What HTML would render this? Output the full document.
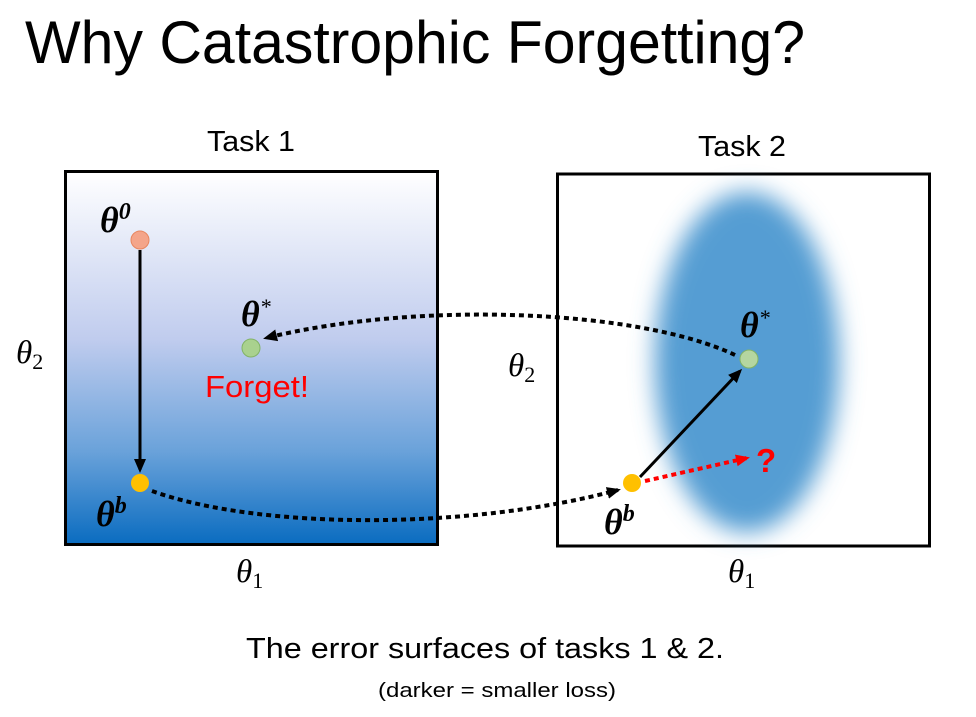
<!DOCTYPE html>
<html><head><meta charset="utf-8"><style>
html,body{margin:0;padding:0;background:#fff;}
svg{display:block;}
text{font-family:"Liberation Sans Narrow","Liberation Sans",sans-serif;}
.m{font-family:"Liberation Serif",serif;font-style:italic;}
</style></head><body>
<svg width="976" height="717" viewBox="0 0 976 717" xmlns="http://www.w3.org/2000/svg">
<defs>
<linearGradient id="g1" x1="0" y1="0" x2="0" y2="1">
<stop offset="0" stop-color="#ffffff"/>
<stop offset="0.45" stop-color="#c0ccee"/>
<stop offset="0.75" stop-color="#6aa2da"/>
<stop offset="1" stop-color="#0a6cc0"/>
</linearGradient>
<filter id="bl" x="-50%" y="-50%" width="200%" height="200%"><feGaussianBlur stdDeviation="12"/></filter>
<marker id="ah2" markerWidth="14" markerHeight="14" refX="11" refY="7" orient="auto" markerUnits="userSpaceOnUse"><path d="M0,1 L14,7 L0,13 z" fill="#000"/></marker>
<marker id="ahr" markerWidth="14" markerHeight="14" refX="11" refY="7" orient="auto" markerUnits="userSpaceOnUse"><path d="M0,1 L14,7 L0,13 z" fill="#f00"/></marker>
</defs>
<text x="25" y="63" font-size="60" font-weight="300" textLength="780" lengthAdjust="spacingAndGlyphs" fill="#000">Why Catastrophic Forgetting?</text>
<text x="207" y="151" font-size="29" textLength="88" lengthAdjust="spacingAndGlyphs">Task 1</text>
<text x="698" y="156" font-size="29" textLength="88" lengthAdjust="spacingAndGlyphs">Task 2</text>

<rect x="65.5" y="171.5" width="372" height="373" fill="url(#g1)" stroke="#000" stroke-width="3"/>
<rect x="557.5" y="174" width="372" height="372" fill="#fff" stroke="#000" stroke-width="3"/>
<ellipse cx="747" cy="362" rx="92" ry="170" fill="#559dd3" filter="url(#bl)"/>

<line x1="140" y1="250" x2="140" y2="470" stroke="#000" stroke-width="3" marker-end="url(#ah2)"/>
<path d="M152,491 C260,530 470,530 618,490" fill="none" stroke="#000" stroke-width="4" stroke-dasharray="5,4" marker-end="url(#ah2)"/>
<path d="M735,355 C640,310 420,300 266,338" fill="none" stroke="#000" stroke-width="4" stroke-dasharray="5,4" marker-end="url(#ah2)"/>
<line x1="640" y1="477" x2="740" y2="371" stroke="#000" stroke-width="3" marker-end="url(#ah2)"/>
<line x1="645" y1="481" x2="747" y2="458" stroke="#f00" stroke-width="4" stroke-dasharray="5,4" marker-end="url(#ahr)"/>

<circle cx="140" cy="240" r="9" fill="#f4a58a" stroke="#e8865f"/>
<circle cx="140" cy="483" r="9" fill="#ffc000"/>
<circle cx="251" cy="348" r="9" fill="#a9d18e" stroke="#82b366"/>
<circle cx="749" cy="359" r="9" fill="#b5d6a0" stroke="#82b366"/>
<circle cx="632" cy="483" r="9" fill="#ffc000"/>

<text class="m" x="100" y="232" font-size="36" font-weight="bold">θ<tspan font-size="24" dy="-13">0</tspan></text>
<text class="m" x="96" y="526" font-size="36" font-weight="bold">θ<tspan font-size="24" dy="-13">b</tspan></text>
<text class="m" x="241" y="326" font-size="36" font-weight="bold">θ<tspan font-size="22" dy="-12" font-weight="normal">*</tspan></text>
<text class="m" x="740" y="337" font-size="36" font-weight="bold">θ<tspan font-size="22" dy="-12" font-weight="normal">*</tspan></text>
<text class="m" x="604" y="534" font-size="36" font-weight="bold">θ<tspan font-size="24" dy="-13">b</tspan></text>
<text x="205" y="397" font-size="31" fill="#f00" textLength="104" lengthAdjust="spacingAndGlyphs">Forget!</text>
<text x="756" y="472" font-size="33" font-weight="bold" fill="#f00">?</text>

<text class="m" x="16" y="363" font-size="33">θ<tspan font-size="22" dy="6" font-style="normal">2</tspan></text>
<text class="m" x="508" y="376" font-size="33">θ<tspan font-size="22" dy="6" font-style="normal">2</tspan></text>
<text class="m" x="236" y="582" font-size="33">θ<tspan font-size="22" dy="6" font-style="normal">1</tspan></text>
<text class="m" x="728" y="582" font-size="33">θ<tspan font-size="22" dy="6" font-style="normal">1</tspan></text>

<text x="246" y="658" font-size="29" textLength="478" lengthAdjust="spacingAndGlyphs">The error surfaces of tasks 1 &amp; 2.</text>
<text x="378" y="697" font-size="20" textLength="238" lengthAdjust="spacingAndGlyphs">(darker = smaller loss)</text>
</svg>
</body></html>
